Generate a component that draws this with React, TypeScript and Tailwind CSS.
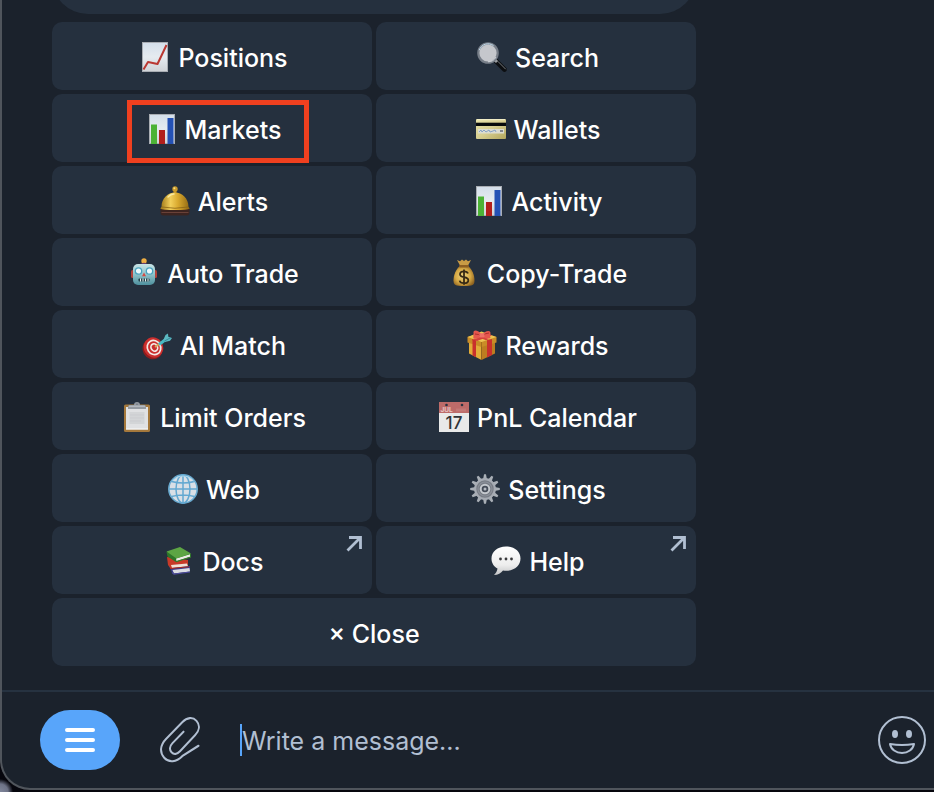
import type { ReactNode } from "react";

// ── Icons ────────────────────────────────────────────────

function Icon({ children }: { children: ReactNode }) {
    return (
        <svg viewBox="0 0 30 30" className="size-[30px] shrink-0" aria-hidden="true">
            {children}
        </svg>
    );
}

function ChartPaper({ id }: { id: string }) {
    return (
        <>
            <defs>
                <linearGradient id={id} x1="0" y1="0" x2="0" y2="1">
                    <stop offset="0" stopColor="#d3deea" />
                    <stop offset="0.5" stopColor="#e6ebf0" />
                    <stop offset="1" stopColor="#cfd2d6" />
                </linearGradient>
            </defs>
            <rect x="2" y="0" width="26" height="30" fill={`url(#${id})`} />
            <rect x="2.5" y="0.5" width="25" height="29" fill="none" stroke="#a9adb3" />
        </>
    );
}

function PositionsIcon() {
    return (
        <Icon>
            <ChartPaper id="paper-line" />
            <path d="M3.5 27.5 8 20l9.5 2L26.5 3" fill="none" stroke="#ba3832" strokeWidth="2" strokeLinejoin="round" />
        </Icon>
    );
}

function BarsIcon({ id }: { id: string }) {
    return (
        <Icon>
            <ChartPaper id={id} />
            <rect x="4" y="10.5" width="6" height="19.5" fill="#4cb235" />
            <rect x="12" y="16" width="6" height="14" fill="#b21f1c" />
            <rect x="20.5" y="4" width="6" height="26" fill="#2451b5" />
        </Icon>
    );
}

function SearchIcon() {
    return (
        <Icon>
            <path d="m18.5 18.5 9 9" stroke="#0c0e11" strokeWidth="4.6" strokeLinecap="round" />
            <path d="m21 19.5 7.5 7.5" stroke="#777b80" strokeWidth="1" strokeLinecap="round" />
            <path d="m17.5 17.5 2.5 2.5" stroke="#9a9da1" strokeWidth="3" />
            <circle cx="11" cy="11" r="9.7" fill="#c5c7cc" stroke="#777e88" strokeWidth="2.2" />
            <path d="M2.3 8.2a9.2 9.2 0 0 1 14.2-4.6" fill="none" stroke="#c2dced" strokeWidth="1" />
            <path d="M19 15a9 9 0 0 1-8 4.8" fill="none" stroke="#e4e7eb" strokeWidth="0.8" />
        </Icon>
    );
}

function CardIcon() {
    return (
        <Icon>
            <defs>
                <linearGradient id="card" x1="0" y1="0" x2="1" y2="1">
                    <stop offset="0" stopColor="#e6e1a9" />
                    <stop offset="0.5" stopColor="#d8cf91" />
                    <stop offset="1" stopColor="#b3a75c" />
                </linearGradient>
            </defs>
            <rect x="0" y="5" width="30" height="20" rx="1" fill="url(#card)" />
            <path d="M1 5.7h28" stroke="#f6f2cf" />
            <rect x="0" y="8.7" width="30" height="3.3" fill="#080b0c" />
            <rect x="2" y="15" width="26" height="4.5" fill="#dcddd1" />
            <path d="m3 18 2-2 1 2 2-2 2 2 3-2 1 2 3-1 2-1 1 2" fill="none" stroke="#7d9bc4" strokeWidth="0.9" />
            <path d="M24 17h3" stroke="#454b5a" strokeWidth="1.2" />
        </Icon>
    );
}

function BellIcon() {
    return (
        <Icon>
            <defs>
                <linearGradient id="bell">
                    <stop offset="0" stopColor="#9c7416" />
                    <stop offset="0.35" stopColor="#f2cf5a" />
                    <stop offset="0.6" stopColor="#d9a92e" />
                    <stop offset="1" stopColor="#8f6612" />
                </linearGradient>
            </defs>
            <path d="M.5 23h29v3.500q0 3-3 3h-23q-3 0-3-3z" fill="#3c2420" />
            <path d="M1.5 26.5h27" stroke="#694138" />
            <rect x="13.5" y="4" width="3" height="4" fill="#b98a1e" />
            <circle cx="15" cy="3" r="2.7" fill="#c9992a" />
            <circle cx="14.4" cy="2.2" r="1" fill="#f7df86" />
            <path d="M1.500 21C1.500 12 8 6.500 15 6.500S28.500 12 28.500 21l1.300 1.500Q28 24 15 24T.2 22.500z" fill="url(#bell)" />
            <path d="M2 21q13 2.500 26 0" fill="none" stroke="#8a6415" strokeWidth="0.8" />
            <path d="M8 11q3-3.200 6-3" fill="none" stroke="#fbeaa0" strokeWidth="1.4" strokeLinecap="round" />
        </Icon>
    );
}

function RobotIcon() {
    return (
        <Icon>
            <defs>
                <linearGradient id="robot" x1="0" y1="0" x2="0" y2="1">
                    <stop offset="0" stopColor="#c8e4e6" />
                    <stop offset="0.5" stopColor="#8ec2c9" />
                    <stop offset="1" stopColor="#4d8f9d" />
                </linearGradient>
            </defs>
            <rect x="2" y="12" width="4" height="8" rx="1.5" fill="#b2433c" />
            <rect x="24" y="12" width="4" height="8" rx="1.5" fill="#b2433c" />
            <circle cx="15" cy="3" r="2.7" fill="#eeae42" />
            <path d="M12 7q0-2.200 3-2.200T18 7z" fill="#6a3f6c" />
            <rect x="4" y="6" width="22" height="21" rx="5" fill="url(#robot)" />
            <circle cx="9.5" cy="13" r="3.2" fill="#eefafd" stroke="#4aa3bf" strokeWidth="1.3" />
            <circle cx="20.5" cy="13" r="3.2" fill="#eefafd" stroke="#4aa3bf" strokeWidth="1.3" />
            <path d="m15 14.500 2 3.700h-4z" fill="#d64b43" />
            <rect x="9.5" y="20.5" width="11" height="3" rx="0.8" fill="#26434b" />
            <path d="M11.500 20.500v3M14 20.500v3M16.500 20.500v3M19 20.500v3" stroke="#e8f2f3" strokeWidth="1" />
        </Icon>
    );
}

function MoneyBagIcon() {
    return (
        <Icon>
            <defs>
                <radialGradient id="bag" cx="0.45" cy="0.5" r="0.6">
                    <stop offset="0" stopColor="#f0d682" />
                    <stop offset="0.6" stopColor="#d6a944" />
                    <stop offset="1" stopColor="#8f6320" />
                </radialGradient>
            </defs>
            <path d="m8 2 3 1.200L13 1.500l2 1.500 2-1.500 2 1.700L22 2l-3.500 6.500h-7z" fill="#c99b45" />
            <path d="M11 8C7 11 4.500 17 4.500 22.500 4.500 27 6.500 28 15 28s10.500-1 10.500-5.500C25.500 17 23 11 19 8z" fill="url(#bag)" />
            <rect x="10" y="7" width="10" height="2.4" rx="1.2" fill="#8d5e22" />
            <path
                d="M19 15.500c-.6-1.600-2-2.200-4-2.200-2.300 0-4 1-4 2.900 0 4.300 8.300 1.700 8.300 6 0 2-1.800 3-4.300 3-2.400 0-4-.9-4.400-2.600M15 11.500v15.300"
                fill="none"
                stroke="#372a16"
                strokeWidth="1.8"
            />
        </Icon>
    );
}

function TargetIcon() {
    return (
        <Icon>
            <ellipse cx="10.5" cy="19" rx="9.8" ry="10.5" fill="#8f1c1d" transform="rotate(-30 10.5 19)" />
            <ellipse cx="11.5" cy="17.5" rx="9.6" ry="10.3" fill="#cc2e2d" transform="rotate(-30 11.5 17.5)" />
            <ellipse cx="12" cy="17.5" rx="6.6" ry="7.3" fill="none" stroke="#f3e9e5" strokeWidth="1.7" transform="rotate(-30 12 17.5)" />
            <ellipse cx="12.3" cy="17.5" rx="3.2" ry="3.8" fill="#c92d2d" stroke="#f3e9e5" strokeWidth="1.7" transform="rotate(-30 12.3 17.5)" />
            <path d="m13 17 5-3.500" stroke="#d6a45b" strokeWidth="1.8" />
            <path d="m17 14.500 6-4.500" stroke="#48b9c2" strokeWidth="3" />
            <path d="m21.500 9.500 2-4.500L26 3.500l.3 3.300L30 8l-2 2.800-5 1.200z" fill="#5bb9c2" />
            <path d="m22.500 11 6.500-3.500" stroke="#2d7e90" strokeWidth="0.8" />
        </Icon>
    );
}

function GiftIcon() {
    return (
        <Icon>
            <path d="M2 12v11.500L14.500 30V15z" fill="#e2ac38" />
            <path d="M28 12v11.500L14.500 30V15z" fill="#bd7d20" />
            <path d="M.5 7v5.500l14 4.500 15-4.500V7l-15-4z" fill="#c98c27" />
            <path d="m.5 7 14-5.500 15 5.500-15 5z" fill="#edc351" />
            <path d="m5 9 4 1.300v16.900l-3.500-1.800V11zM20 10.300 25 9v16l-5 2.400z" fill="#c9312c" />
            <path d="m6 5 4-1.500 12 5.700-3 1zM22 4.200l3 1L10 11l-4-1.500z" fill="#d4423b" />
            <path d="M14.500 12v18" stroke="#8f5d14" strokeWidth="0.6" />
            <path d="M15 5C11-.5 6-.8 6.500 3c.3 3.500-.5 4.500 0 5.500C9 9 12.500 8.500 15 6c3 3 6.500 3 8.500 2-.5-2-.3-3 0-5C23.500-.5 18 .5 15 5z" fill="#e5564d" />
            <path d="M8 4q4 0 6 2m8-3q-4 0-6 3" fill="none" stroke="#a82a29" strokeWidth="0.9" />
            <rect x="12.5" y="3.2" width="5" height="4.3" rx="1.3" fill="#ee7066" />
        </Icon>
    );
}

function ClipboardIcon() {
    return (
        <Icon>
            <rect x="2" y="2.5" width="26" height="27.5" rx="1.5" fill="#a4783c" />
            <rect x="4" y="5" width="22" height="22.5" fill="#e0e1e3" />
            <path d="M4 27h22" stroke="#fafafa" strokeWidth="1" />
            <path d="M7.500 10h15v12h-15z" fill="#d3d5d7" />
            <path d="M8 13h14M8 16h14M8 19h11" stroke="#c8cacd" strokeWidth="0.7" />
            <path d="M6 7V4.500Q6 3 8 3h4a3 3 0 0 1 6 0h4q2 0 2 1.500V7z" fill="#949aa1" />
            <path d="M7 4.200h16" stroke="#c8ccd1" strokeWidth="0.9" />
            <circle cx="15" cy="2.2" r="0.8" fill="#6b727b" />
        </Icon>
    );
}

function CalendarIcon() {
    return (
        <Icon>
            <rect width="30" height="30" fill="#e9e9e9" />
            <rect width="30" height="11" fill="#bd6b69" />
            <circle cx="7.5" cy="3" r="1.3" fill="#293341" />
            <circle cx="23" cy="3" r="1.3" fill="#293341" />
            <path d="M17 8h10" stroke="#c98785" strokeWidth="3" opacity="0.5" />
            <text x="1.5" y="10" fontSize="6.5" fontWeight="700" fill="#e8c6c5" fontFamily="Inter, sans-serif">
                JUL
            </text>
            <text x="15" y="27" fontSize="17" textAnchor="middle" fill="#303236" fontFamily="Inter, sans-serif">
                17
            </text>
        </Icon>
    );
}

function GlobeIcon() {
    return (
        <Icon>
            <circle cx="15" cy="15" r="14.2" fill="#d9dfe6" stroke="#68a9cf" strokeWidth="1.6" />
            <g fill="none" stroke="#63a8d1" strokeWidth="1.5">
                <ellipse cx="15" cy="15" rx="7" ry="14" />
                <path d="M15 1v28M1 15h28M3.500 7.500q11.500 3 23 0M3.500 22.500q11.500-3 23 0" />
            </g>
            <path d="M4.500 7a13.500 13.500 0 0 1 21 0" fill="none" stroke="#a9d8ef" strokeWidth="1" />
        </Icon>
    );
}

const TEETH = [0, 30, 60, 90, 120, 150, 180, 210, 240, 270, 300, 330];

function GearIcon() {
    return (
        <Icon>
            {TEETH.map((angle) => (
                <path key={angle} d="M13 5.500 14 .2h2l1 5.300z" fill="#a9afb6" transform={`rotate(${angle} 15 15)`} />
            ))}
            <circle cx="15" cy="15" r="9.8" fill="#777c85" stroke="#a6abb3" strokeWidth="2.2" />
            <circle cx="15" cy="15" r="7" fill="none" stroke="#8b9099" strokeWidth="1.2" />
            <circle cx="15" cy="15" r="4.3" fill="#454c58" stroke="#c4c8cd" strokeWidth="2" />
            <circle cx="15" cy="15" r="1.5" fill="#b5bac1" />
        </Icon>
    );
}

function BooksIcon() {
    return (
        <Icon>
            <path d="m5 20 3 6.500 18-1.500v-5z" fill="#3c3c8a" />
            <path d="m8.500 24 17-2 .5 3.500-16 2z" fill="#dadce3" />
            <path d="M8 26.500 10 28l16-2" fill="none" stroke="#4c4aa0" strokeWidth="1.2" />
            <path d="m3 11 21 3v4.500L7 23l-3-4z" fill="#c83a28" />
            <path d="m7 19 16-1.500 1 2.800L8 22z" fill="#efe1d6" />
            <path d="m6 22.500 19-1.800" stroke="#a92a20" strokeWidth="1" />
            <path d="m2.500 6 1 4.500L12 16l15-5V8z" fill="#2e7729" />
            <path d="m12 12.500 14-4.300v2.600L12.500 15z" fill="#ecece5" />
            <path d="M2.500 5.500 16 1l11 6.500-14.500 5z" fill="#5da544" />
            <path d="M12 15.800 27 11" stroke="#377f2d" strokeWidth="1" />
        </Icon>
    );
}

function SpeechIcon() {
    return (
        <Icon>
            <defs>
                <linearGradient id="speech" x1="0" y1="0" x2="0" y2="1">
                    <stop offset="0" stopColor="#ffffff" />
                    <stop offset="0.65" stopColor="#ededed" />
                    <stop offset="1" stopColor="#c4c5c7" />
                </linearGradient>
            </defs>
            <path
                d="M15 .5C6.500.5.5 5.500.5 12.500c0 4.500 2.300 8 6 10-.3 2.500-1.500 4.500-3.500 6.500 4 0 7-2 9-4.500q1.500.3 3 .3c8.500 0 14.500-5.300 14.500-12.300S23.500.5 15 .5z"
                fill="url(#speech)"
            />
            <circle cx="9.5" cy="13" r="1.4" fill="#3a3a3c" />
            <circle cx="15" cy="13" r="1.4" fill="#3a3a3c" />
            <circle cx="20.5" cy="13" r="1.4" fill="#3a3a3c" />
        </Icon>
    );
}

// ── Inline keyboard ──────────────────────────────────────

interface KeyItem {
    label: string;
    icon: ReactNode;
    external?: boolean;
    highlighted?: boolean;
}

const KEYS: KeyItem[] = [
    { label: "Positions", icon: <PositionsIcon /> },
    { label: "Search", icon: <SearchIcon /> },
    { label: "Markets", icon: <BarsIcon id="paper-markets" />, highlighted: true },
    { label: "Wallets", icon: <CardIcon /> },
    { label: "Alerts", icon: <BellIcon /> },
    { label: "Activity", icon: <BarsIcon id="paper-activity" /> },
    { label: "Auto Trade", icon: <RobotIcon /> },
    { label: "Copy-Trade", icon: <MoneyBagIcon /> },
    { label: "AI Match", icon: <TargetIcon /> },
    { label: "Rewards", icon: <GiftIcon /> },
    { label: "Limit Orders", icon: <ClipboardIcon /> },
    { label: "PnL Calendar", icon: <CalendarIcon /> },
    { label: "Web", icon: <GlobeIcon /> },
    { label: "Settings", icon: <GearIcon /> },
    { label: "Docs", icon: <BooksIcon />, external: true },
    { label: "Help", icon: <SpeechIcon />, external: true },
];

function KeyButton({ label, icon, external, highlighted }: KeyItem) {
    return (
        <button
            type="button"
            className="relative flex h-[68px] items-center justify-center gap-2 rounded-[10px] bg-[#25303e] pt-0.5 pl-1"
        >
            {icon}
            <span className="pt-0.5">{label}</span>
            {external && (
                <svg viewBox="0 0 16 16" className="absolute top-2.5 right-2.5 size-4" aria-hidden="true">
                    <path d="M3 1.500h11.500V13M14 2 1.500 14.500" fill="none" stroke="#b1bfd2" strokeWidth="2.8" />
                </svg>
            )}
            {highlighted && (
                <span className="absolute top-1.5 left-[75px] h-[63px] w-[182px] border-5 border-[#f0401f]" />
            )}
        </button>
    );
}

// ── Composer ─────────────────────────────────────────────

function Composer() {
    return (
        <div className="flex h-[98px] items-center gap-10 border-t-2 border-[#263240] pr-2 pl-[38px]">
            <button
                type="button"
                aria-label="Menu"
                className="flex h-[60px] w-20 shrink-0 items-center justify-center rounded-[30px] bg-[#58a5fa] text-white"
            >
                <svg viewBox="0 0 30 24" className="h-6 w-[30px]" aria-hidden="true">
                    <path d="M2 2h26M2 12h26M2 22h26" stroke="currentColor" strokeWidth="4" strokeLinecap="round" />
                </svg>
            </button>
            <button type="button" aria-label="Attach file" className="shrink-0 text-[#b1bfd2]">
                <svg viewBox="0 1 40 46" className="h-12 w-10" preserveAspectRatio="none" fill="none" aria-hidden="true">
                    <path
                        d="M23.500 16 12.500 27c-3 3-3.300 6.500-1 8.800s5.500 2 8.500-1L35 19.500c4.500-4.500 5.200-9.800 1.500-13.800s-9.500-3.500-14 1L6 23c-6 6-6.500 13-1.800 18s12 4.300 18-1.500L38.500 29.500"
                        stroke="currentColor"
                        strokeWidth="2"
                        strokeLinecap="round"
                    />
                </svg>
            </button>
            <input
                type="text"
                aria-label="Message"
                placeholder="Write a message..."
                className="h-8 min-w-0 flex-1 border-l-2 border-[#58a5fa] bg-transparent pt-1 text-[25px] text-white outline-none placeholder:text-[#b1bfd2]"
            />
            <button type="button" aria-label="Emoji" className="shrink-0 text-[#b1bfd2]">
                <svg viewBox="0 0 48 48" className="size-12" fill="none" aria-hidden="true">
                    <circle cx="24" cy="24" r="23" stroke="currentColor" strokeWidth="2" />
                    <ellipse cx="17" cy="18" rx="3" ry="4" fill="currentColor" />
                    <ellipse cx="31" cy="18" rx="3" ry="4" fill="currentColor" />
                    <path d="M12 28q12 2 24 0c-1 5.500-6 9-12 9s-11-3.500-12-9z" stroke="currentColor" strokeWidth="2" strokeLinejoin="round" />
                </svg>
            </button>
        </div>
    );
}

export default function App() {
    return (
        <div className="min-h-screen bg-[#06060d] bg-[radial-gradient(circle_at_0%_100%,#80869b_0px,#6d7286_8px,#06060d_13px)] pb-0.5 font-['Inter',sans-serif] text-white">
            <div className="rounded-bl-[30px] border-b-2 border-l-2 border-[#50555c] bg-[#1b222c]">
                <main className="ml-[50px] flex max-w-[644px] flex-col pb-6">
                    {/* Tail of the message above the keyboard */}
                    <div className="mb-2 flex h-3.5 items-end overflow-hidden">
                        <div className="h-20 w-full shrink-0 rounded-[36px] bg-[#25303e]" />
                    </div>
                    <div className="grid grid-cols-2 gap-1 text-[25px] leading-8 font-medium">
                        {KEYS.map((key) => (
                            <KeyButton key={key.label} {...key} />
                        ))}
                        <button
                            type="button"
                            className="col-span-2 flex h-[68px] items-center justify-center rounded-[10px] bg-[#25303e] pt-1"
                        >
                            × Close
                        </button>
                    </div>
                </main>
                <Composer />
            </div>
        </div>
    );
}
